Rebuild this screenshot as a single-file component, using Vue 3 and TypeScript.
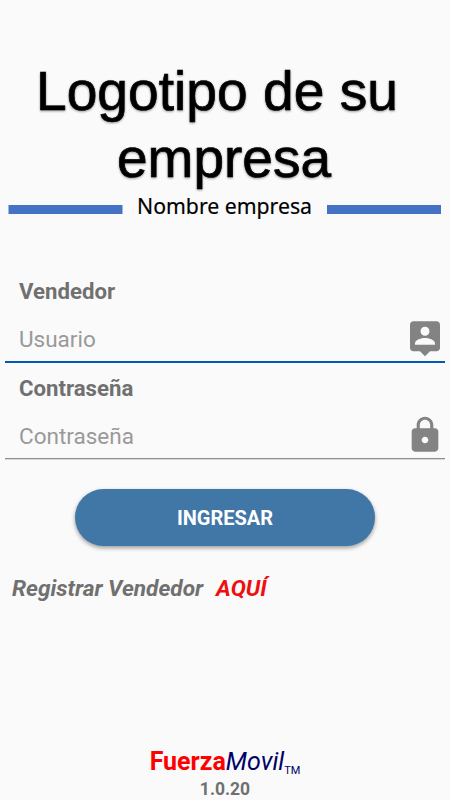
<script setup lang="ts">
import { ref } from 'vue'

const usuario = ref<string>('')
const clave = ref<string>('')
const version = '1.0.20'
</script>

<template>
  <main class="login">
    <svg class="logo" viewBox="0 0 450 170" role="img">
      <g class="logo-title">
        <text x="36" y="50.3" textLength="362" lengthAdjust="spacingAndGlyphs">Logotipo de su</text>
        <text x="117" y="116.8" textLength="214" lengthAdjust="spacingAndGlyphs">empresa</text>
      </g>
      <rect class="bar" x="8.5" y="145" width="114" height="9" />
      <text class="logo-name" x="137" y="154.3" textLength="175" lengthAdjust="spacingAndGlyphs">Nombre empresa</text>
      <rect class="bar" x="327" y="145" width="114" height="9" />
    </svg>

    <form class="form" @submit.prevent>
      <label class="label" for="usuario">Vendedor</label>
      <div class="field active">
        <input id="usuario" v-model="usuario" type="text" placeholder="Usuario" />
        <svg class="icon" viewBox="0 0 24 24">
          <path d="M19 2H5c-1.11 0-2 .9-2 2v14c0 1.1.89 2 2 2h4l3 3 3-3h4c1.1 0 2-.9 2-2V4c0-1.1-.9-2-2-2zm-7 3.3c1.49 0 2.7 1.21 2.7 2.7s-1.21 2.7-2.7 2.7S9.3 9.49 9.3 8 10.51 5.3 12 5.3zM18 16H6v-.9c0-2 4-3.1 6-3.1s6 1.1 6 3.1v.9z" />
        </svg>
      </div>
      <label class="label second" for="clave">Contraseña</label>
      <div class="field">
        <input id="clave" v-model="clave" type="password" placeholder="Contraseña" />
        <svg class="icon" viewBox="0 0 24 24">
          <path d="M18 8h-1V6c0-2.76-2.24-5-5-5S7 3.24 7 6v2H6c-1.1 0-2 .9-2 2v10c0 1.1.9 2 2 2h12c1.1 0 2-.9 2-2V10c0-1.1-.9-2-2-2zm-6 9c-1.1 0-2-.9-2-2s.9-2 2-2 2 .9 2 2-.9 2-2 2zm3.1-9H8.9V6c0-1.71 1.39-3.1 3.1-3.1s3.1 1.39 3.1 3.1v2z" />
        </svg>
      </div>
      <button class="submit" type="submit">INGRESAR</button>
    </form>

    <p class="register">
      <span>Registrar Vendedor</span>
      <a class="here">AQUÍ</a>
    </p>

    <footer class="footer">
      <div class="brand"><b>Fuerza</b><i>Movil</i><small>TM</small></div>
      <div class="version">{{ version }}</div>
    </footer>
  </main>
</template>

<style>
body {
  background: #fafafa;
}
</style>

<style scoped>
.login {
  box-sizing: border-box;
  width: 450px;
  height: 800px;
  padding-top: 60px;
  display: flex;
  flex-direction: column;
  overflow: hidden;
  background: #fafafa;
  color: #707070;
  font-family: Roboto, sans-serif;
}
.logo {
  display: block;
  flex: none;
  width: 450px;
  height: 170px;
}
.logo-title {
  font: 55.5px "Liberation Sans", sans-serif;
  fill: #000;
  stroke: #000;
  stroke-width: 0.7px;
  filter: drop-shadow(0.5px 1px 1px rgba(0, 0, 0, 0.4));
}
.logo-name {
  font: 22px "Noto Sans", sans-serif;
  fill: #000;
  stroke: #000;
  stroke-width: 0.2px;
}
.bar {
  fill: #4472c4;
}
.form {
  display: flex;
  flex-direction: column;
  padding: 0 5px;
  margin-top: 47px;
}
.label {
  height: 28px;
  padding-left: 14px;
  font-size: 22.2px;
  font-weight: 700;
  line-height: 28px;
}
.second {
  margin-top: 11px;
}
.field {
  box-sizing: border-box;
  display: flex;
  align-items: flex-start;
  height: 58px;
  padding-top: 13px;
  border-bottom: 1px solid #8e8e8e;
  box-shadow: 0 1px 0 #d8d8d8;
}
.field.active {
  border-bottom: 2px solid #0059b8;
  box-shadow: none;
}
.second + .field {
  height: 57px;
}
input {
  flex: 1;
  min-width: 0;
  height: 42px;
  padding: 0 0 0 14px;
  border: 0;
  outline: 0;
  background: transparent;
  color: #707070;
  font: 22.5px Roboto, sans-serif;
}
input::placeholder {
  color: #999;
  opacity: 1;
}
.icon {
  flex: none;
  width: 40px;
  height: 40px;
  fill: #838383;
}
.submit {
  align-self: center;
  width: 300px;
  height: 57px;
  margin-top: 30px;
  padding: 0;
  border: 0;
  border-radius: 29px;
  background: #4177a7;
  color: #fff;
  font: 700 20px Roboto, sans-serif;
  box-shadow: 0 2px 4px rgba(0, 0, 0, 0.38);
}
.register {
  display: flex;
  gap: 13px;
  margin: 29px 0 0 12px;
  font-size: 22.65px;
  font-style: italic;
  font-weight: 700;
  line-height: 28px;
}
.here {
  color: #ed1010;
}
.footer {
  margin: auto 0 -1px;
  text-align: center;
}
.brand {
  display: flex;
  justify-content: center;
  align-items: baseline;
  height: 30px;
  font-size: 25px;
  line-height: 30px;
  color: #000066;
}
.brand b {
  color: #f00;
}
.brand small {
  position: relative;
  top: 4px;
  font-size: 11px;
}
.version {
  font-size: 17.5px;
  font-weight: 700;
  line-height: 24px;
}
</style>
